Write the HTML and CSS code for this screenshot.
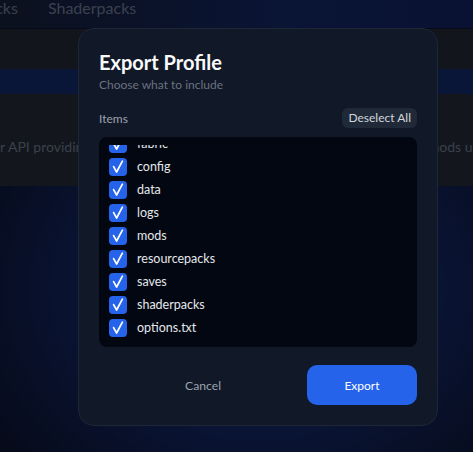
FILE: index.html
```html
<!DOCTYPE html>
<html lang="en">
<head>
<meta charset="utf-8">
<title>Export Profile</title>
<link rel="stylesheet" href="styles.css">
</head>
<body>
<div class="page">
  <nav class="tabs">
    <span class="tab">Resourcepacks</span>
    <span class="tab">Shaderpacks</span>
  </nav>
  <div class="band band-dark"></div>
  <div class="band band-blue"></div>
  <div class="card-bg">
    <span class="bg-text bg-left">r API providing</span>
    <span class="bg-text bg-right">mods using</span>
  </div>
</div>

<div class="overlay">
  <div class="modal">
    <h1 class="title">Export Profile</h1>
    <p class="subtitle">Choose what to include</p>
    <div class="items-head">
      <span class="items-label">Items</span>
      <button class="btn-ghost">Deselect All</button>
    </div>
    <div class="list">
      <div class="scroll" id="scroll">
        <label class="row"><span class="check"><svg viewBox="0 0 18 18"><path d="M4.6 8.6 L7.6 14 L13.4 3.2"/></svg></span><span class="name">fabric</span></label>
        <label class="row"><span class="check"><svg viewBox="0 0 18 18"><path d="M4.6 8.6 L7.6 14 L13.4 3.2"/></svg></span><span class="name">config</span></label>
        <label class="row"><span class="check"><svg viewBox="0 0 18 18"><path d="M4.6 8.6 L7.6 14 L13.4 3.2"/></svg></span><span class="name">data</span></label>
        <label class="row"><span class="check"><svg viewBox="0 0 18 18"><path d="M4.6 8.6 L7.6 14 L13.4 3.2"/></svg></span><span class="name">logs</span></label>
        <label class="row"><span class="check"><svg viewBox="0 0 18 18"><path d="M4.6 8.6 L7.6 14 L13.4 3.2"/></svg></span><span class="name">mods</span></label>
        <label class="row"><span class="check"><svg viewBox="0 0 18 18"><path d="M4.6 8.6 L7.6 14 L13.4 3.2"/></svg></span><span class="name">resourcepacks</span></label>
        <label class="row"><span class="check"><svg viewBox="0 0 18 18"><path d="M4.6 8.6 L7.6 14 L13.4 3.2"/></svg></span><span class="name">saves</span></label>
        <label class="row"><span class="check"><svg viewBox="0 0 18 18"><path d="M4.6 8.6 L7.6 14 L13.4 3.2"/></svg></span><span class="name">shaderpacks</span></label>
        <label class="row"><span class="check"><svg viewBox="0 0 18 18"><path d="M4.6 8.6 L7.6 14 L13.4 3.2"/></svg></span><span class="name">options.txt</span></label>
      </div>
    </div>
    <div class="actions">
      <button class="btn-cancel">Cancel</button>
      <button class="btn-primary">Export</button>
    </div>
  </div>
</div>
<script>
  var s = document.getElementById('scroll');
  s.scrollTop = s.scrollHeight;
</script>
</body>
</html>
```

FILE: styles.css
```css
html, body {
  margin: 0;
  padding: 0;
  height: 100%;
}
body {
  font-family: "Lato", "Noto Sans", sans-serif;
  background: radial-gradient(ellipse 70% 60% at 55% 64%, #0c1b48 0%, #0a1538 45%, #060a18 100%);
  overflow: hidden;
  position: relative;
}
.page {
  display: flex;
  flex-direction: column;
}
.tabs {
  height: 28px;
  display: flex;
  align-items: center;
  gap: 30px;
  background: linear-gradient(90deg, #0c111e 0%, #0a1434 60%, #091232 100%);
  padding-bottom: 13px;
  box-sizing: border-box;
  overflow: hidden;
  white-space: nowrap;
}
.tab {
  font-size: 16px;
  color: #3b4150;
}
.tab:first-child { margin-left: -86px; }
.band { width: 100%; }
.band-dark { height: 40px; background: #12151c; margin-top: 1px; }
.band-blue { height: 25px; background: #0a1638; }
.card-bg {
  height: 92px;
  background: #13161d;
  display: flex;
  align-items: center;
  justify-content: space-between;
  overflow: hidden;
  white-space: nowrap;
  padding-top: 12px;
  box-sizing: border-box;
}
.bg-text { font-size: 14px; color: #3b414d; }
.bg-left { margin-left: 0; }
.bg-right { margin-right: -24px; }

.overlay {
  position: absolute;
  inset: 0;
  display: flex;
  justify-content: flex-start;
  align-items: flex-start;
  padding: 28px 0 0 78px;
}
.modal {
  width: 360px;
  box-sizing: border-box;
  background: #111827;
  border: 1px solid #1e2738;
  border-radius: 16px;
  padding: 20px 20px 20px;
  display: flex;
  flex-direction: column;
}
.title {
  margin: 0;
  font-size: 20px;
  font-weight: 700;
  color: #f9fafb;
  line-height: 26px;
}
.subtitle {
  margin: 2px 0 0;
  font-size: 12px;
  color: #6b7280;
  line-height: 16px;
}
.items-head {
  margin-top: 15px;
  display: flex;
  justify-content: space-between;
  align-items: center;
}
.items-label { font-size: 12px; color: #9ca3af; }
.btn-ghost {
  font-family: inherit;
  font-size: 12px;
  color: #d1d5db;
  background: #1f2937;
  border: 0;
  border-radius: 6px;
  height: 20px;
  padding: 0 6px;
  line-height: 20px;
}
.list {
  margin-top: 9px;
  height: 210px;
  background: #030712;
  border-radius: 8px;
  padding: 8px 10px;
  box-sizing: border-box;
}
.scroll {
  height: 194px;
  overflow-y: auto;
  scrollbar-width: none;
  display: flex;
  flex-direction: column;
}
.scroll::-webkit-scrollbar { display: none; }
.row {
  flex: 0 0 23px;
  display: flex;
  align-items: center;
  gap: 10px;
}
.check {
  width: 18px;
  height: 18px;
  border-radius: 4px;
  background: #2563eb;
  display: flex;
  flex: 0 0 18px;
}
.check svg { width: 18px; height: 18px; }
.check path {
  fill: none;
  stroke: #ffffff;
  stroke-width: 1.7;
  stroke-linecap: round;
  stroke-linejoin: round;
}
.name {
  font-size: 12.5px;
  color: #e5e7eb;
}
.actions {
  margin-top: 18px;
  display: flex;
  align-items: center;
}
.btn-cancel {
  flex: 1;
  font-family: inherit;
  font-size: 12.2px;
  color: #9ca3af;
  background: none;
  border: 0;
  height: 40px;
}
.btn-primary {
  width: 110px;
  height: 40px;
  font-family: inherit;
  font-size: 12px;
  color: #ffffff;
  background: #2563eb;
  border: 0;
  border-radius: 10px;
}
```
